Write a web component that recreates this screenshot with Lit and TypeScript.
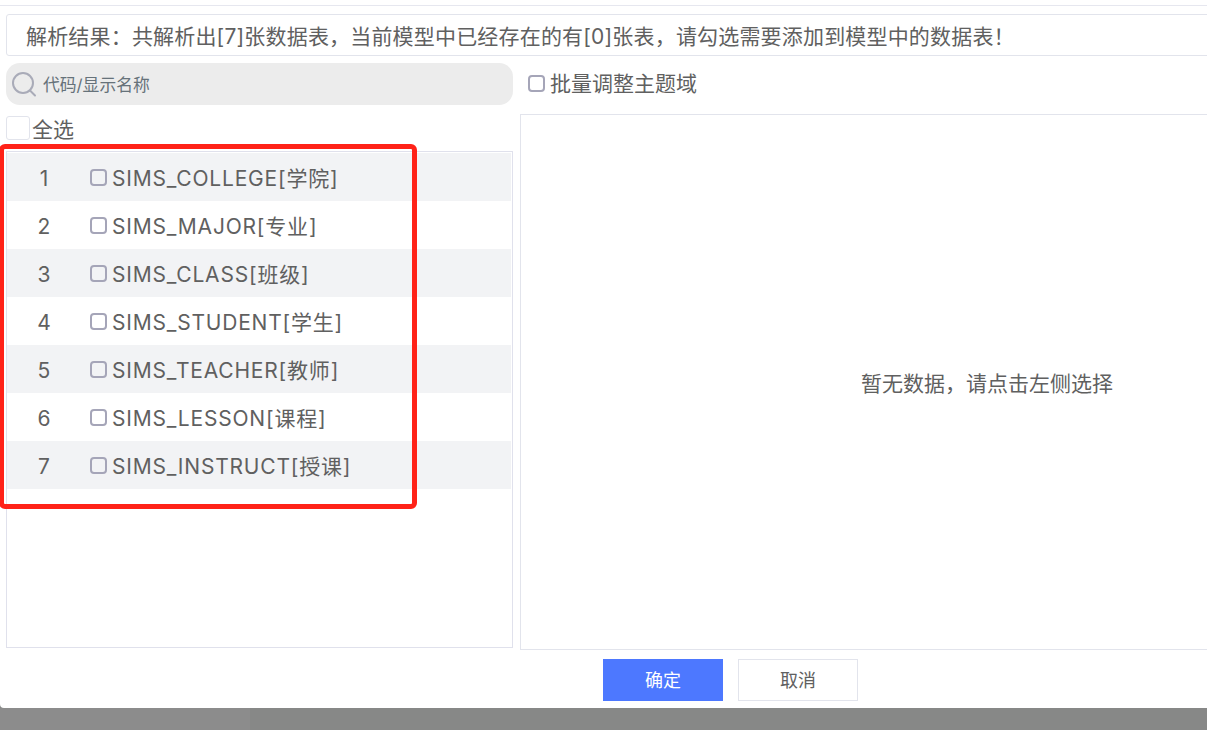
import { LitElement, html, css } from "lit";
import { customElement } from "lit/decorators.js";

const ROWS = [
  "SIMS_COLLEGE[学院]",
  "SIMS_MAJOR[专业]",
  "SIMS_CLASS[班级]",
  "SIMS_STUDENT[学生]",
  "SIMS_TEACHER[教师]",
  "SIMS_LESSON[课程]",
  "SIMS_INSTRUCT[授课]",
];

@customElement("app-root")
export class AppRoot extends LitElement {
  static styles = css`
    :host {
      display: block;
      position: relative;
      width: 1207px;
      height: 730px;
      overflow: hidden;
      background: #878887;
      font-family: "Inter", "Noto Sans CJK SC", sans-serif;
      color: #606060;
    }
    .shade { height: 22px; width: 250px; background: #8c8c8c; }
    .modal {
      height: 708px;
      box-sizing: border-box;
      background: #fff;
      border-bottom-left-radius: 4px;
      padding-top: 5px;
      overflow: hidden;
    }
    .topline { height: 1px; background: #e6e7ef; margin-bottom: 8px; }
    .info {
      box-sizing: border-box;
      height: 42px;
      width: 1220px;
      margin-left: 6px;
      padding: 4px 0 0 19px;
      border: 1px solid #e2e4ec;
      border-radius: 3px;
      font-size: 21px;
      line-height: 36px;
      letter-spacing: 0.18px;
      white-space: nowrap;
    }
    .cols { display: flex; gap: 7px; margin: 7px 0 0 6px; width: 1448px; }
    .left { width: 507px; flex: none; }
    .right { flex: 1; }
    .search {
      height: 42px;
      border-radius: 14px;
      background: #ececec;
      display: flex;
      align-items: center;
      padding-left: 5px;
      gap: 5px;
      color: #66727a;
      font-size: 16.8px;
    }
    .search svg { display: block; flex: none; }
    .all {
      display: flex;
      align-items: center;
      height: 24px;
      margin: 11px 0;
      font-size: 21px;
      gap: 2px;
    }
    .all i {
      box-sizing: border-box;
      width: 24px;
      height: 24px;
      border: 1px solid #e2e4ec;
      border-radius: 3px;
    }
    .list {
      box-sizing: border-box;
      height: 497px;
      border: 1px solid #e0e1ec;
      padding-top: 1px;
    }
    .row {
      display: flex;
      align-items: center;
      height: 48px;
      width: 504px;
      font-size: 21px;
    }
    .row:nth-child(odd) { background: #f2f3f5; }
    .num { width: 74px; text-align: center; flex: none; padding-top: 2px; }
    .chk {
      box-sizing: border-box;
      width: 17px;
      height: 17px;
      border: 2px solid #a5a5b8;
      border-radius: 4px;
      flex: none;
      margin: 0 5px 0 9px;
    }
    .name { white-space: nowrap; letter-spacing: 0.8px; }
    .batch {
      height: 42px;
      box-sizing: border-box;
      display: flex;
      align-items: center;
      font-size: 21px;
      padding: 0 0 2px 8px;
    }
    .batch .chk { margin: 0 5px 0 0; }
    .batch .label { padding-bottom: 2px; }
    .detail {
      box-sizing: border-box;
      height: 536px;
      margin-top: 9px;
      border: 1px solid #e2e4ec;
      display: flex;
      align-items: center;
      justify-content: center;
      font-size: 21px;
    }
    .footer {
      display: flex;
      gap: 15px;
      margin: 9px 0 0 603px;
    }
    .btn {
      box-sizing: border-box;
      width: 120px;
      height: 42px;
      display: flex;
      align-items: center;
      justify-content: center;
      font-size: 18px;
      background: #fff;
      border: 1px solid #e2e4ec;
      color: #606060;
      padding-bottom: 3px;
    }
    .btn.primary { background: #4d78ff; border-color: #4d78ff; color: #fff; }
    .mark {
      position: absolute;
      left: -1px;
      top: 144px;
      width: 418px;
      height: 365px;
      box-sizing: border-box;
      border: 5px solid #ff2218;
      border-radius: 6px;
      pointer-events: none;
    }
  `;

  render() {
    return html`
      <div class="modal">
        <div class="topline"></div>
        <div class="info">解析结果：共解析出[7]张数据表，当前模型中已经存在的有[0]张表，请勾选需要添加到模型中的数据表！</div>
        <div class="cols">
          <div class="left">
            <div class="search">
              <svg width="27" height="27" viewBox="0 0 27 27" fill="none" stroke="#a9abb8" stroke-width="2">
                <circle cx="12" cy="12" r="10"></circle>
                <path d="M19 19.5 L24 24.5" stroke-linecap="round"></path>
              </svg>
              <span>代码/显示名称</span>
            </div>
            <div class="all"><i></i><span>全选</span></div>
            <div class="list">
              ${ROWS.map(
                (r, i) => html`<div class="row">
                  <span class="num">${i + 1}</span><span class="chk"></span><span class="name">${r}</span>
                </div>`
              )}
            </div>
          </div>
          <div class="right">
            <div class="batch"><span class="chk"></span><span class="label">批量调整主题域</span></div>
            <div class="detail"><span>暂无数据，请点击左侧选择</span></div>
          </div>
        </div>
        <div class="footer">
          <div class="btn primary">确定</div>
          <div class="btn">取消</div>
        </div>
      </div>
      <div class="shade"></div>
      <div class="mark"></div>
    `;
  }
}
